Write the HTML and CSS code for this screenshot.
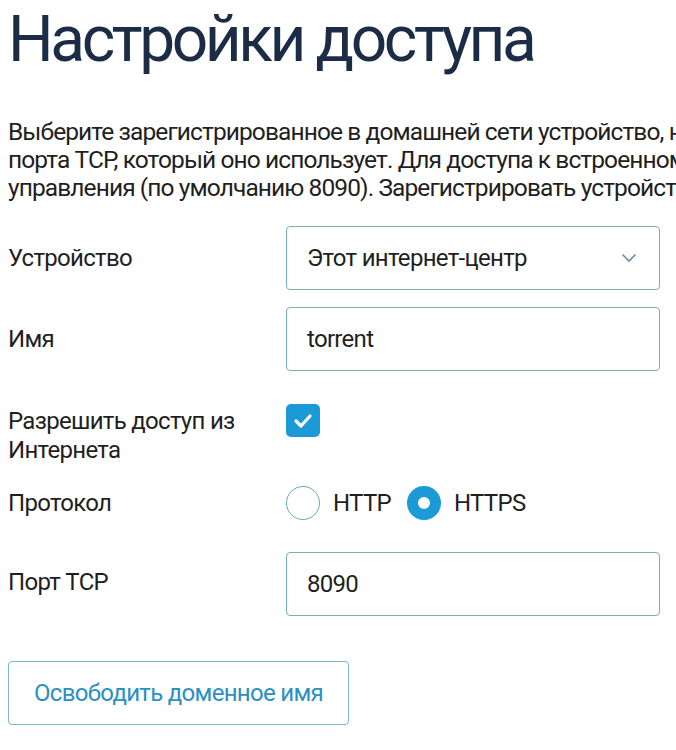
FILE: index.html
```html
<!DOCTYPE html>
<html lang="ru">
<head>
  <meta charset="UTF-8" />
  <meta name="viewport" content="width=device-width, initial-scale=1.0"/>
  <title>Настройки доступа</title>
  <link rel="stylesheet" href="styles.css">
</head>
<body>

  <div class="page">
    <h1 class="title">Настройки доступа</h1>

    <p class="intro">
      Выберите зарегистрированное в домашней сети устройство, на котором работает веб-сервер, и укажите номер<br>
      порта TCP, который оно использует. Для доступа к встроенному веб-интерфейсу интернет-центра укажите порт<br>
      управления (по умолчанию 8090). Зарегистрировать устройство можно на странице «Список устройств».
    </p>

    <div class="form">
      <div class="row row-device">
        <label class="label">Устройство</label>
        <div class="field select">
          <span>Этот интернет-центр</span>
          <svg class="chevron" width="16" height="10" viewBox="0 0 16 10">
            <path d="M1.5 1.5 L8 8 L14.5 1.5" fill="none" stroke="#6f8fa0" stroke-width="1.6"/>
          </svg>
        </div>
      </div>

      <div class="row row-name">
        <label class="label">Имя</label>
        <div class="field">torrent</div>
      </div>

      <div class="row row-check">
        <label class="label">Разрешить доступ из<br>Интернета</label>
        <span class="checkbox">
          <svg width="20" height="16" viewBox="0 0 20 16">
            <path d="M3 8 L8 13 L17 3" fill="none" stroke="#fff" stroke-width="3.2" stroke-linecap="round" stroke-linejoin="round"/>
          </svg>
        </span>
      </div>

      <div class="row row-proto">
        <label class="label">Протокол</label>
        <div class="radios">
          <span class="radio"></span>
          <span class="radio-text">HTTP</span>
          <span class="radio checked"></span>
          <span class="radio-text">HTTPS</span>
        </div>
      </div>

      <div class="row row-port">
        <label class="label">Порт TCP</label>
        <div class="field">8090</div>
      </div>
    </div>

    <button class="btn">Освободить доменное имя</button>
  </div>

</body>
</html>
```

FILE: styles.css
```css
body {
  font-family: Roboto, "Liberation Sans", sans-serif;
  background-color: #fff;
  color: #1f1f1f;
  margin: 0;
  padding: 0;
  overflow: hidden;
}
.page {
  width: 1500px;
  padding: 0 8px;
}
.title {
  font-size: 64px;
  font-weight: 400;
  color: #1c2c46;
  margin: 0;
  padding-top: 2px;
  line-height: 76px;
  letter-spacing: -3.4px;
}
.intro {
  font-size: 24.5px;
  line-height: 28px;
  margin: 40px 0 0;
  white-space: nowrap;
  letter-spacing: -0.9px;
}
.form {
  margin-top: 24px;
  width: 652px;
}
.row {
  display: flex;
  align-items: center;
}
.label {
  width: 278px;
  flex-shrink: 0;
  font-size: 24px;
  line-height: 29px;
  letter-spacing: -0.7px;
}
.field {
  flex: 1;
  height: 64px;
  border: 1px solid #74b1b9;
  border-radius: 4px;
  box-sizing: border-box;
  display: flex;
  align-items: center;
  padding: 0 20px;
  font-size: 24px;
  letter-spacing: -0.7px;
}
.select {
  justify-content: space-between;
  padding-right: 22px;
}
.row-name {
  margin-top: 17px;
}
.row-check {
  align-items: flex-start;
  margin-top: 33px;
}
.row-check .label {
  padding-top: 3px;
}
.checkbox {
  width: 34px;
  height: 33px;
  border-radius: 5px;
  background-color: #1c9ad8;
  display: flex;
  align-items: center;
  justify-content: center;
}
.row-proto {
  margin-top: 21px;
  height: 34px;
}
.radios {
  display: flex;
  align-items: center;
}
.radio {
  width: 34px;
  height: 34px;
  border-radius: 50%;
  border: 1px solid #6aa9b5;
  box-sizing: border-box;
}
.radio.checked {
  border: 11px solid #1c9ad8;
}
.radio-text {
  font-size: 24px;
  letter-spacing: -0.7px;
  margin: 0 16px 0 13px;
}
.radio.checked + .radio-text {
  margin-left: 13px;
}
.row-port {
  margin-top: 32px;
}
.row-port .label {
  margin-top: -4px;
}
.btn {
  margin-top: 45px;
  width: 341px;
  height: 64px;
  background: #fff;
  border: 1px solid #7fb6cc;
  border-radius: 4px;
  color: #2b90c2;
  font-family: Roboto, "Liberation Sans", sans-serif;
  font-size: 24px;
  letter-spacing: -0.7px;
  cursor: pointer;
}
```
